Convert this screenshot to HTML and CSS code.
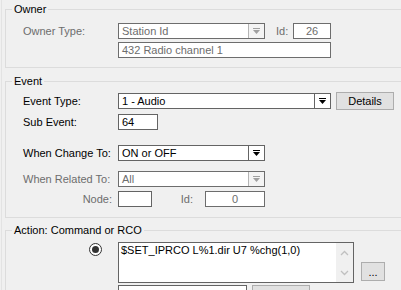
FILE: index.html
```html
<!DOCTYPE html>
<html lang="en">
<head>
  <meta charset="UTF-8">
  <title>Event Properties</title>
  <link rel="stylesheet" href="styles.css">
</head>
<body>
  <div class="dialog">
    <!-- Owner -->
    <div class="group owner">
      <span class="group-title">Owner</span>
      <div class="row">
        <span class="label disabled">Owner Type:</span>
        <div class="combo is-disabled w147">
          <span class="combo-text">Station Id</span>
          <span class="combo-btn">
            <svg width="7" height="6" viewBox="0 0 7 6"><rect x="0" y="0" width="7" height="1" fill="#a0a0a0"/><polygon points="0,2 7,2 3.5,6" fill="#a0a0a0"/></svg>
          </span>
        </div>
        <span class="mid-label disabled">Id:</span>
        <div class="field is-disabled id-box">26</div>
      </div>
      <div class="row gap3 indent">
        <div class="field is-disabled name-box">432 Radio channel 1</div>
      </div>
    </div>

    <!-- Event -->
    <div class="group event">
      <span class="group-title">Event</span>
      <div class="row h18">
        <span class="label">Event Type:</span>
        <div class="combo w213">
          <span class="combo-text">1 - Audio</span>
          <span class="combo-btn">
            <svg width="7" height="6" viewBox="0 0 7 6"><rect x="0" y="0" width="7" height="1" fill="#000"/><polygon points="0,2 7,2 3.5,6" fill="#000"/></svg>
          </span>
        </div>
        <button class="btn details">Details</button>
      </div>
      <div class="row gap4">
        <span class="label">Sub Event:</span>
        <div class="field sub-box">64</div>
      </div>
      <div class="row gap15">
        <span class="label">When Change To:</span>
        <div class="combo w147">
          <span class="combo-text">ON or OFF</span>
          <span class="combo-btn">
            <svg width="7" height="6" viewBox="0 0 7 6"><rect x="0" y="0" width="7" height="1" fill="#000"/><polygon points="0,2 7,2 3.5,6" fill="#000"/></svg>
          </span>
        </div>
      </div>
      <div class="row gap10">
        <span class="label disabled">When Related To:</span>
        <div class="combo is-disabled w147">
          <span class="combo-text">All</span>
          <span class="combo-btn">
            <svg width="7" height="6" viewBox="0 0 7 6"><rect x="0" y="0" width="7" height="1" fill="#a0a0a0"/><polygon points="0,2 7,2 3.5,6" fill="#a0a0a0"/></svg>
          </span>
        </div>
      </div>
      <div class="row gap4">
        <span class="label right disabled">Node:</span>
        <div class="field node-box"></div>
        <span class="node-id disabled">Id:</span>
        <div class="field is-disabled id2-box">0</div>
      </div>
    </div>

    <!-- Action -->
    <div class="group action">
      <span class="group-title">Action: Command or RCO</span>
      <div class="row action-row">
        <div class="radio-cell"><span class="radio"><span class="dot"></span></span></div>
        <div class="memo">
          <div class="memo-text">$SET_IPRCO L%1.dir U7 %chg(1,0)</div>
          <div class="scroll">
            <svg width="9" height="6" viewBox="0 0 9 6"><polyline points="1,5 4.5,1.5 8,5" fill="none" stroke="#c0c0c0" stroke-width="1.3"/></svg>
            <svg width="9" height="6" viewBox="0 0 9 6"><polyline points="1,1 4.5,4.5 8,1" fill="none" stroke="#c0c0c0" stroke-width="1.3"/></svg>
          </div>
        </div>
        <button class="btn dots">...</button>
      </div>
      <div class="row gap2 indent">
        <div class="field bottom-box"></div>
        <button class="btn bottom-btn"></button>
      </div>
    </div>
  </div>
</body>
</html>
```

FILE: styles.css
```css
/* dialog page */
html, body {
  margin: 0;
  padding: 0;
  height: 100%;
  overflow: hidden;
}

body {
  background-color: #f0f0f0;
  font-family: "Liberation Sans", Arial, sans-serif;
  font-size: 11px;
  color: #000;
}

.dialog {
  margin-left: 1px;
  border-left: 1px solid #e3e3e3;
  padding-left: 3px;
  height: 290px;
  box-sizing: border-box;
  overflow: hidden;
}

/* group boxes */
.group {
  position: relative;
  border: 1px solid #dcdcdc;
  padding-left: 17px;
  margin-right: -12px;
}

.group-title {
  position: absolute;
  top: -7px;
  left: 6px;
  padding: 0 2px;
  line-height: 13px;
  background-color: #f0f0f0;
}

.owner {
  margin-top: 9px;
  padding-top: 13px;
  padding-bottom: 9px;
}

.event {
  margin-top: 13px;
  padding-top: 10px;
  padding-bottom: 10px;
}

.action {
  margin-top: 12px;
  padding-top: 11px;
  height: 80px;
}

/* rows */
.row {
  display: flex;
  align-items: center;
  height: 16px;
}

.row.h18 { height: 18px; }
.row.indent { padding-left: 95px; }
.gap2 { margin-top: 2px; }
.gap3 { margin-top: 3px; }
.gap4 { margin-top: 4px; }
.gap10 { margin-top: 10px; }
.gap15 { margin-top: 15px; }

.label {
  width: 95px;
  flex: none;
  line-height: 14px;
}

.label.right {
  text-align: right;
  padding-right: 6px;
  width: 89px;
}

.disabled {
  color: #6d6d6d;
}

/* inputs */
.field, .combo {
  box-sizing: border-box;
  height: 16px;
  border: 1px solid #646464;
  background: #fff;
  line-height: 14px;
  padding: 0 3px;
  white-space: nowrap;
  overflow: hidden;
  flex: none;
}

.is-disabled {
  color: #6d6d6d;
  border-color: #6d6d6d;
}

.combo {
  display: flex;
  padding: 0;
}

.combo-text {
  flex: 1;
  padding-left: 3px;
}

.combo-btn {
  width: 15px;
  border-left: 1px solid #646464;
  display: flex;
  align-items: center;
  justify-content: center;
  background: #fff;
}

.combo.is-disabled .combo-btn {
  border-left-color: #b4b4b4;
  background: #f4f4f4;
}

.w147 { width: 147px; }
.w213 { width: 213px; }

.mid-label {
  margin-left: 11px;
  width: 17px;
}

.id-box {
  width: 38px;
  text-align: center;
}

.name-box { width: 213px; }
.sub-box { width: 40px; }
.node-box { width: 34px; }

.node-id {
  width: 53px;
  box-sizing: border-box;
  text-align: right;
  padding-right: 12px;
}

.id2-box {
  width: 60px;
  text-align: center;
}

/* buttons */
.btn {
  box-sizing: border-box;
  font-family: "Liberation Sans", Arial, sans-serif;
  font-size: 11px;
  color: #000;
  background: #e1e1e1;
  border: 1px solid #adadad;
  padding: 0;
  line-height: 14px;
  flex: none;
}

.details {
  margin-left: 5px;
  width: 58px;
  height: 18px;
}

/* action row */
.action-row {
  height: 41px;
  align-items: flex-start;
}

.radio-cell {
  width: 95px;
  flex: none;
  padding-left: 66px;
  padding-top: 1px;
  box-sizing: border-box;
}

.radio {
  box-sizing: border-box;
  display: flex;
  align-items: center;
  justify-content: center;
  width: 13px;
  height: 13px;
  border: 1px solid #333;
  border-radius: 50%;
  background: #fff;
}

.dot {
  width: 7px;
  height: 7px;
  border-radius: 50%;
  background: #333;
}

.memo {
  box-sizing: border-box;
  display: flex;
  width: 236px;
  height: 41px;
  border: 1px solid #646464;
  background: #fff;
  flex: none;
}

.memo-text {
  flex: 1;
  padding: 1px 2px;
  line-height: 13px;
  white-space: nowrap;
}

.scroll {
  width: 17px;
  background: #f0f0f0;
  display: flex;
  flex-direction: column;
  justify-content: space-between;
  align-items: center;
  padding: 7px 0 6px;
}

.dots {
  margin-left: 7px;
  margin-top: 20px;
  width: 24px;
  height: 19px;
}

.bottom-box {
  width: 129px;
  height: 16px;
}

.bottom-btn {
  margin-left: 5px;
  width: 58px;
  height: 18px;
  align-self: flex-start;
}
```
